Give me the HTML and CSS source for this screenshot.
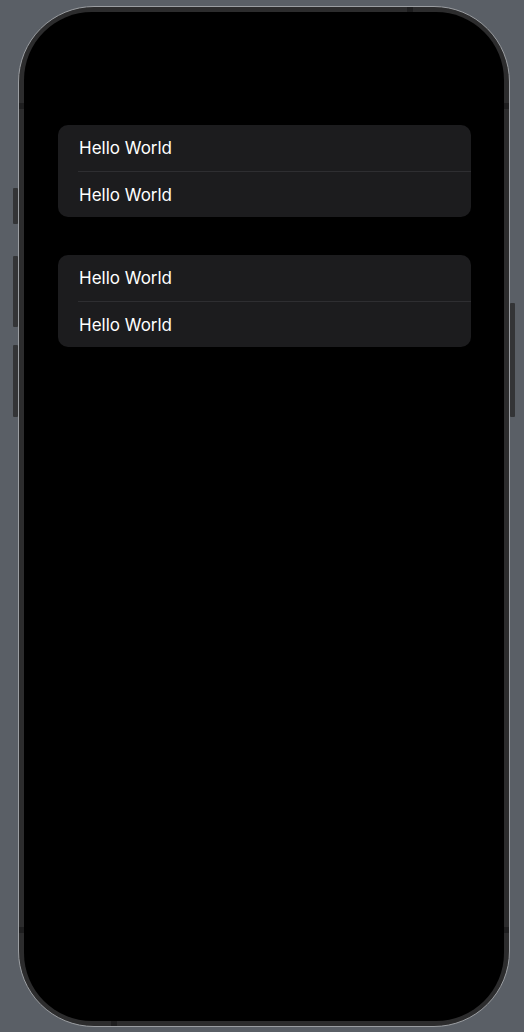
FILE: index.html
```html
<!DOCTYPE html>
<html>
<head>
<meta charset="utf-8">
<link rel="stylesheet" href="styles.css">
</head>
<body>
<div class="device">
  <span class="btn btn-action"></span>
  <span class="btn btn-vol-up"></span>
  <span class="btn btn-vol-down"></span>
  <span class="btn btn-power"></span>
  <span class="band band-l1"></span>
  <span class="band band-l2"></span>
  <span class="band band-r1"></span>
  <span class="band band-r2"></span>
  <span class="band band-t"></span>
  <span class="band band-b"></span>
  <div class="bezel">
    <div class="screen">
      <div class="list">
        <div class="section">
          <div class="row">Hello World</div>
          <div class="row">Hello World</div>
        </div>
        <div class="section">
          <div class="row">Hello World</div>
          <div class="row">Hello World</div>
        </div>
      </div>
    </div>
  </div>
</div>
</body>
</html>
```
FILE: styles.css
```css
html, body {
  margin: 0;
  padding: 0;
}
body {
  background: #5a5f66;
  width: 524px;
  height: 1032px;
  overflow: hidden;
  font-family: Inter, "Liberation Sans", sans-serif;
}
.device {
  position: relative;
  margin: 6px 0 0 18px;
  width: 492px;
  height: 1021px;
  box-sizing: border-box;
  border-radius: 76px;
  border: 1px solid #9b9ea2;
  background: #2c2c2d;
  padding: 5px;
  display: flex;
}
.bezel {
  flex: 1;
  display: flex;
  border-radius: 71px;
  background: #2c2c2d;
  padding: 0;
}
.screen {
  flex: 1;
  background: #000;
  border-radius: 68px;
  overflow: hidden;
  padding: 113px 33px 0 34px;
}
.list {
  display: flex;
  flex-direction: column;
  gap: 38px;
}
.section {
  background: #1c1c1e;
  border-radius: 10px;
  display: flex;
  flex-direction: column;
}
.row {
  height: 46px;
  display: flex;
  align-items: center;
  padding-left: 21px;
  color: #fff;
  font-size: 17px;
  letter-spacing: 0;
}
.row + .row {
  border-top: 1px solid #2e2e31;
  margin-left: 20px;
  padding-left: 1px;
  height: 45px;
}
.btn {
  position: absolute;
  background: #333436;
  border-radius: 1px;
  width: 5px;
}
.btn-action { left: -6px; top: 181px; height: 36px; }
.btn-vol-up { left: -6px; top: 249px; height: 71px; }
.btn-vol-down { left: -6px; top: 338px; height: 72px; }
.btn-power { right: -6px; top: 296px; height: 114px; }
.band {
  position: absolute;
  background: #1e1e1f;
}
.band-l1 { left: 0; top: 96px; width: 5px; height: 6px; }
.band-l2 { left: 0; top: 920px; width: 5px; height: 6px; }
.band-r1 { right: 0; top: 96px; width: 5px; height: 6px; }
.band-r2 { right: 0; top: 920px; width: 5px; height: 6px; }
.band-t { top: 0; left: 388px; width: 6px; height: 5px; }
.band-b { bottom: 0; left: 92px; width: 6px; height: 5px; }
```
